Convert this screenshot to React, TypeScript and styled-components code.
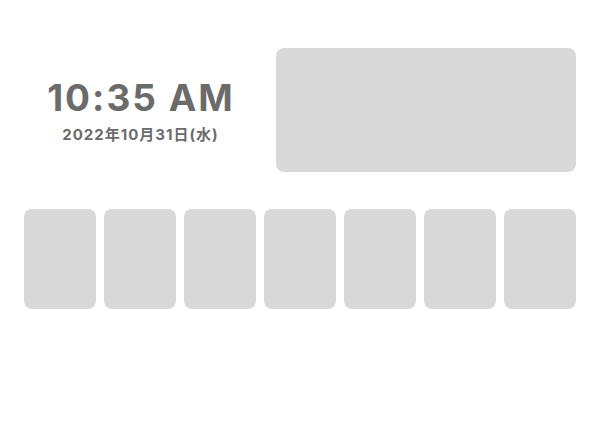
import React from "react";
import styled, { createGlobalStyle } from "styled-components";

const Global = createGlobalStyle`
  html, body { margin: 0; padding: 0; background: #ffffff; }
  body { font-family: Inter, "Noto Sans CJK JP", sans-serif; }
`;

const Page = styled.div`
  width: 600px;
  height: 448px;
  box-sizing: border-box;
  padding: 48px 24px 0;
  display: flex;
  flex-direction: column;
  gap: 37px;
`;

const TopRow = styled.div`
  display: grid;
  grid-template-columns: 1fr 300px;
  gap: 20px;
  height: 124px;
`;

const ClockBlock = styled.div`
  display: flex;
  flex-direction: column;
  align-items: center;
  justify-content: center;
  color: #6b6b6b;
  padding-top: 1px;
`;

const Time = styled.div`
  font-family: Inter, "Liberation Sans", sans-serif;
  font-weight: 700;
  font-size: 37px;
  line-height: 38px;
  letter-spacing: 2px;
  margin-right: -2px;
`;

const DateText = styled.div`
  font-family: Inter, "Noto Sans CJK JP", sans-serif;
  font-weight: 700;
  font-size: 15px;
  line-height: 15px;
  letter-spacing: 1px;
  margin-right: -1px;
  margin-top: 10px;
`;

const Panel = styled.div`
  background: #d9d9d9;
  border-radius: 8px;
`;

const CardRow = styled.div`
  display: grid;
  grid-template-columns: repeat(7, 1fr);
  gap: 8px;
  height: 100px;
`;

const Card = styled.div`
  background: #d9d9d9;
  border-radius: 8px;
`;

export default function App() {
  return (
    <>
      <Global />
      <Page>
        <TopRow>
          <ClockBlock>
            <Time>10:35 AM</Time>
            <DateText>2022年10月31日(水)</DateText>
          </ClockBlock>
          <Panel />
        </TopRow>
        <CardRow>
          {Array.from({ length: 7 }).map((_, i) => (
            <Card key={i} />
          ))}
        </CardRow>
      </Page>
    </>
  );
}
